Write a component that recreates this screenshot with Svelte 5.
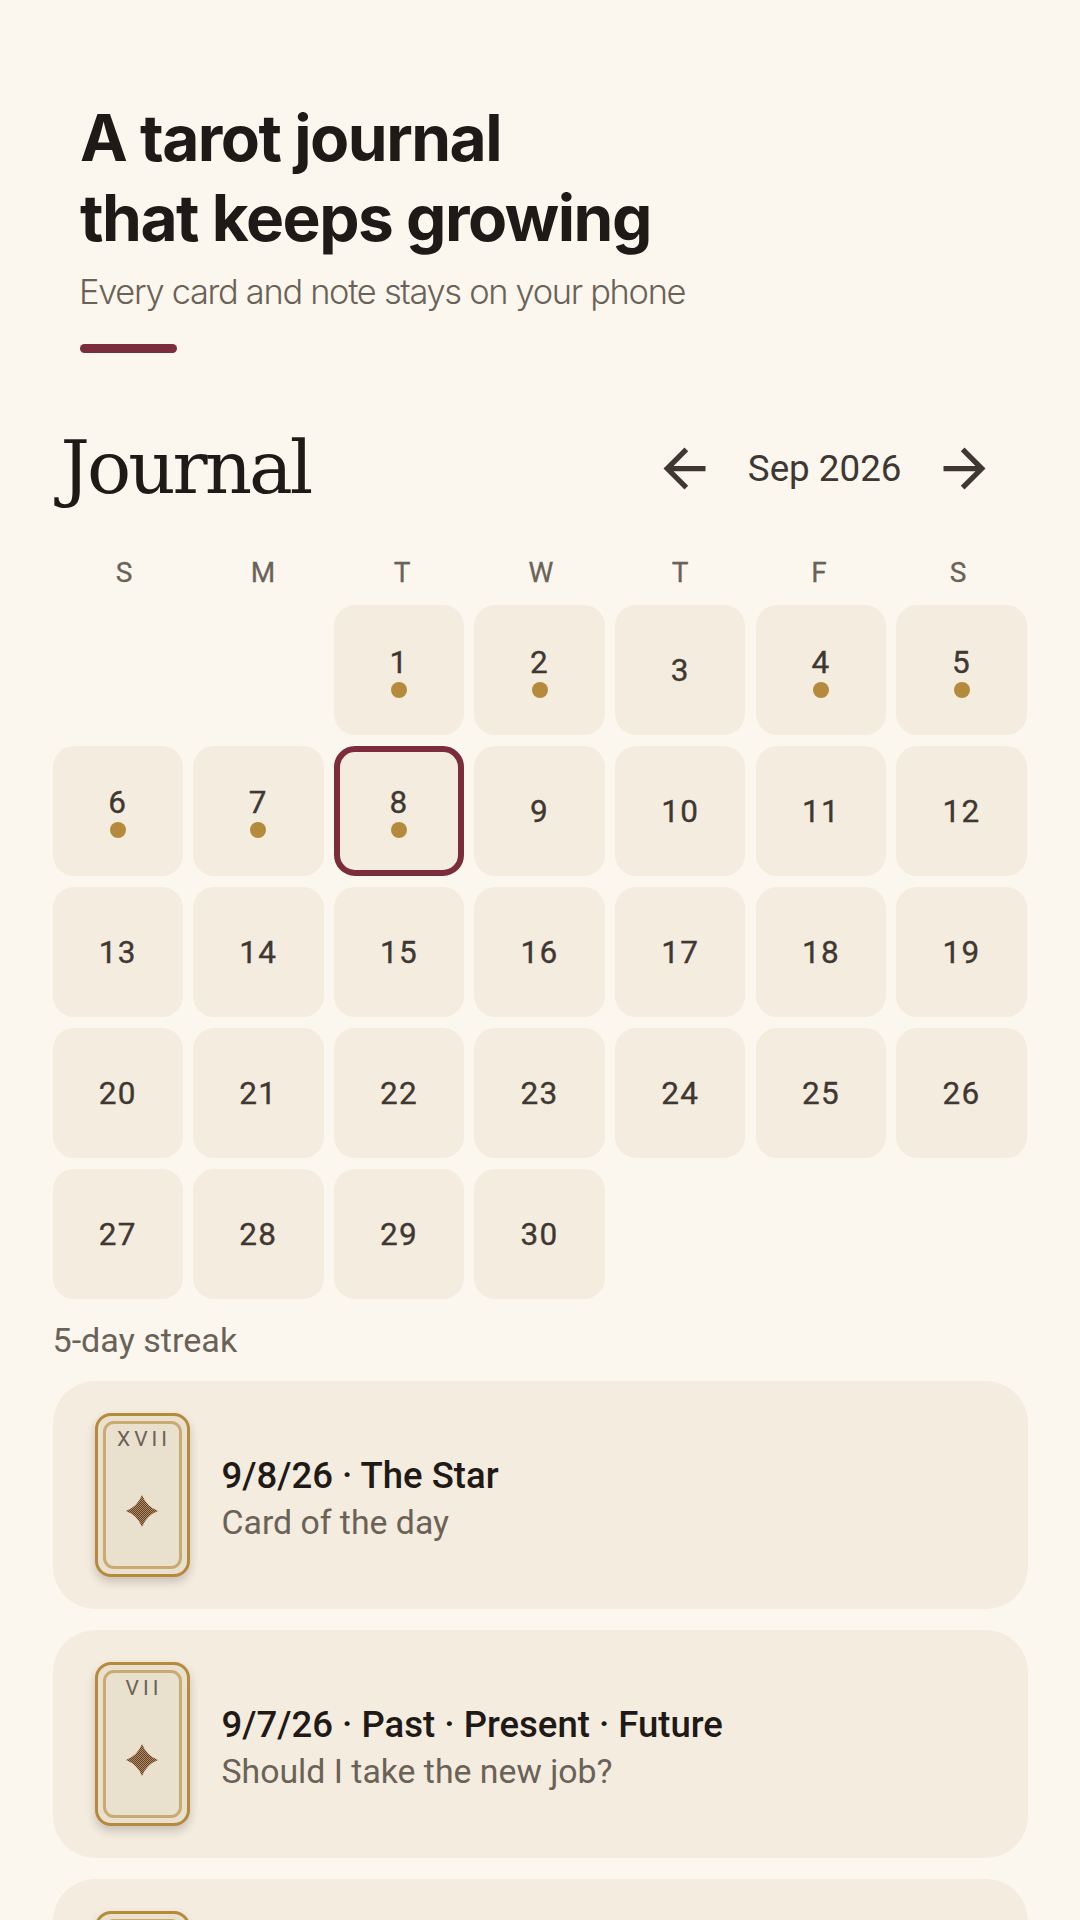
<script>
  const weekdays = ['S', 'M', 'T', 'W', 'T', 'F', 'S'];
  const logged = [1, 2, 4, 5, 6, 7, 8];
  const selected = 8;
  const blanks = [0, 0];
  const days = Array.from({ length: 30 }, (_, i) => i + 1);

  // the third entry runs off the bottom of the screen, only its top edge shows
  const entries = [
    { numeral: 'XVII', title: '9/8/26 · The Star', note: 'Card of the day' },
    { numeral: 'VII', title: '9/7/26 · Past · Present · Future', note: 'Should I take the new job?' },
    { numeral: '', title: '', note: '' }
  ];
</script>

<main class="page">
  <header class="hero">
    <h1>A tarot journal<br />that keeps growing</h1>
    <p>Every card and note stays on your phone</p>
    <div class="rule"></div>
  </header>

  <section class="journal">
    <div class="top">
      <h2>Journal</h2>
      <div class="month">
        <button aria-label="Previous month">
          <svg viewBox="0 0 24 24" width="63" height="63"><path d="M20 11H7.830l5.590-5.590L12 4l-8 8 8 8 1.410-1.410L7.830 13H20z" /></svg>
        </button>
        <span>Sep 2026</span>
        <button aria-label="Next month">
          <svg viewBox="0 0 24 24" width="63" height="63"><path d="M4 11h12.170l-5.590-5.590L12 4l8 8-8 8-1.410-1.410L16.170 13H4z" /></svg>
        </button>
      </div>
    </div>

    <div class="weekdays">
      {#each weekdays as d}
        <span>{d}</span>
      {/each}
    </div>

    <div class="grid">
      {#each blanks as _}
        <div></div>
      {/each}
      {#each days as day}
        <div class="day" class:selected={day === selected}>
          <span>{day}</span>
          {#if logged.includes(day)}
            <i class="dot"></i>
          {/if}
        </div>
      {/each}
    </div>

    <p class="streak">5-day streak</p>

    <div class="entries">
      {#each entries as entry}
        <article class="entry">
          <div class="thumb">
            <div class="inner">
              {#if entry.numeral}
                <span class="numeral">{entry.numeral}</span>
                <svg class="star" viewBox="0 0 32 32" width="32" height="32">
                  <defs>
                    <pattern id="weave" width="2" height="2" patternUnits="userSpaceOnUse">
                      <rect width="2" height="2" fill="#b39140" />
                      <rect width="1" height="1" fill="#5f3a48" />
                      <rect x="1" y="1" width="1" height="1" fill="#5f3a48" />
                    </pattern>
                  </defs>
                  <path d="M16 0Q20.500 11.500 32 16Q20.500 20.500 16 32Q11.500 20.500 0 16Q11.500 11.500 16 0Z" fill="url(#weave)" />
                </svg>
              {/if}
            </div>
          </div>
          {#if entry.title}
            <div class="text">
              <h3>{entry.title}</h3>
              <p>{entry.note}</p>
            </div>
          {/if}
        </article>
      {/each}
    </div>
  </section>
</main>

<style>
  :global(body) {
    background: #fbf7ef;
  }

  .page {
    height: 1920px;
    overflow: hidden;
    background: #fbf7ef;
    color: #1f1a17;
    font-family: Roboto, sans-serif;
  }

  .hero {
    padding: 98px 80px 0;
  }

  h1 {
    margin: 0;
    font-family: Inter, sans-serif;
    font-size: 64px;
    font-weight: 700;
    line-height: 79.500px;
    letter-spacing: -1.500px;
    color: #1f1a17;
  }

  .hero p {
    margin: 13px 0 0 -1px;
    font-family: Inter, sans-serif;
    font-size: 34.400px;
    font-weight: 300;
    line-height: 44px;
    letter-spacing: -1.300px;
    color: #6b6257;
  }

  .rule {
    width: 97px;
    height: 9px;
    margin-top: 30px;
    border-radius: 4.500px;
    background: #7b2d3b;
  }

  .journal {
    padding: 0 52.500px;
  }

  .top {
    display: flex;
    align-items: center;
    justify-content: space-between;
    margin-top: 52px;
    height: 126px;
  }

  h2 {
    margin: 0 0 0 8px;
    font-family: "DejaVu Serif", serif;
    font-size: 73.500px;
    font-weight: 400;
    line-height: 90px;
    letter-spacing: -3px;
    color: #1f1a17;
  }

  .month {
    display: flex;
    align-items: center;
    color: #3f3832;
    font-size: 36.750px;
  }

  .month button {
    display: flex;
    align-items: center;
    justify-content: center;
    width: 126px;
    height: 126px;
    padding: 0;
    border: none;
    background: none;
  }

  .month svg {
    fill: #3f3832;
  }

  .weekdays {
    display: flex;
    margin-top: 24px;
    padding-left: 2px;
  }

  .weekdays span {
    flex: 1;
    text-align: center;
    font-size: 28px;
    line-height: 36px;
    -webkit-text-stroke: 0.3px #6b6257;
    color: #6b6257;
  }

  .grid {
    display: grid;
    grid-template-columns: repeat(7, 1fr);
    column-gap: 10.250px;
    row-gap: 10.900px;
    margin: 14px 0.750px 0 0;
  }

  .day {
    box-sizing: border-box;
    height: 130px;
    padding-top: 2px;
    display: flex;
    flex-direction: column;
    align-items: center;
    justify-content: center;
    border-radius: 21px;
    background: #f4ecdf;
    color: #3f3832;
    font-size: 31.500px;
    line-height: 36px;
    letter-spacing: 1.300px;
    -webkit-text-stroke: 0.35px #3f3832;
  }

  .day.selected {
    border: 6px solid #7b2d3b;
  }

  .dot {
    width: 16px;
    height: 16px;
    margin-top: 1px;
    border-radius: 50%;
    background: #b58a3c;
  }

  .streak {
    margin: 19px 0 0;
    font-size: 34.125px;
    line-height: 44px;
    color: #6b6257;
  }

  .entries {
    display: flex;
    flex-direction: column;
    gap: 21px;
    margin-top: 19.800px;
  }

  .entry {
    display: flex;
    align-items: center;
    gap: 32px;
    padding: 32px 42px;
    border-radius: 42px;
    background: #f4ecdf;
  }

  .thumb {
    box-sizing: border-box;
    flex: none;
    width: 95px;
    height: 164px;
    padding: 5px;
    border: 3px solid #b58a3c;
    border-radius: 16px;
    background: #e9e0cd;
    box-shadow: 0 5px 10px rgba(31, 26, 23, 0.2);
  }

  .inner {
    box-sizing: border-box;
    height: 100%;
    display: flex;
    flex-direction: column;
    align-items: center;
    border: 3px solid #c9aa72;
    border-radius: 11px;
  }

  .numeral {
    margin-top: 3px;
    padding-left: 4px;
    font-size: 21px;
    line-height: 24px;
    letter-spacing: 4px;
    color: #6b6257;
  }

  .star {
    margin-top: 44px;
  }

  .text {
    padding-top: 7px;
  }

  .text h3 {
    margin: 0 0 1px;
    font-size: 36.500px;
    font-weight: 500;
    line-height: 48px;
    color: #1f1a17;
  }

  .text p {
    margin: 0;
    font-size: 33.800px;
    line-height: 44px;
    color: #6b6257;
  }
</style>
